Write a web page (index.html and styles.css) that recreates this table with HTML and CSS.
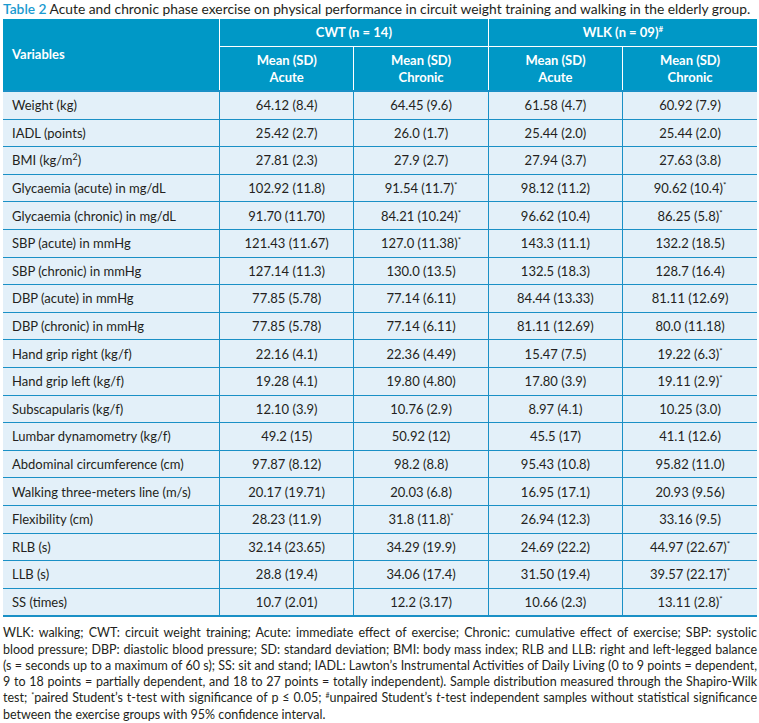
FILE: index.html
```html
<!DOCTYPE html>
<html>
<head>
<meta charset="utf-8">
<link rel="stylesheet" href="styles.css">
</head>
<body>
<div class="wrap">
  <p class="title"><span class="label">Table 2</span> Acute and chronic phase exercise on physical performance in circuit weight training and walking in the elderly group.</p>
  <table class="data">
    <thead>
      <tr class="h1">
        <th rowspan="2" class="var">Variables</th>
        <th colspan="2">CWT (n = 14)</th>
        <th colspan="2">WLK (n = 09)<sup>#</sup></th>
      </tr>
      <tr class="h2">
        <th>Mean (SD)<br>Acute</th>
        <th>Mean (SD)<br>Chronic</th>
        <th>Mean (SD)<br>Acute</th>
        <th>Mean (SD)<br>Chronic</th>
      </tr>
    </thead>
    <tbody>
      <tr><td>Weight (kg)</td><td>64.12 (8.4)</td><td>64.45 (9.6)</td><td>61.58 (4.7)</td><td>60.92 (7.9)</td></tr>
      <tr><td>IADL (points)</td><td>25.42 (2.7)</td><td>26.0 (1.7)</td><td>25.44 (2.0)</td><td>25.44 (2.0)</td></tr>
      <tr><td>BMI (kg/m<sup class="sq">2</sup>)</td><td>27.81 (2.3)</td><td>27.9 (2.7)</td><td>27.94 (3.7)</td><td>27.63 (3.8)</td></tr>
      <tr><td>Glycaemia (acute) in mg/dL</td><td>102.92 (11.8)</td><td>91.54 (11.7)<sup>*</sup></td><td>98.12 (11.2)</td><td>90.62 (10.4)<sup>*</sup></td></tr>
      <tr><td>Glycaemia (chronic) in mg/dL</td><td>91.70 (11.70)</td><td>84.21 (10.24)<sup>*</sup></td><td>96.62 (10.4)</td><td>86.25 (5.8)<sup>*</sup></td></tr>
      <tr><td>SBP (acute) in mmHg</td><td>121.43 (11.67)</td><td>127.0 (11.38)<sup>*</sup></td><td>143.3 (11.1)</td><td>132.2 (18.5)</td></tr>
      <tr><td>SBP (chronic) in mmHg</td><td>127.14 (11.3)</td><td>130.0 (13.5)</td><td>132.5 (18.3)</td><td>128.7 (16.4)</td></tr>
      <tr><td>DBP (acute) in mmHg</td><td>77.85 (5.78)</td><td>77.14 (6.11)</td><td>84.44 (13.33)</td><td>81.11 (12.69)</td></tr>
      <tr><td>DBP (chronic) in mmHg</td><td>77.85 (5.78)</td><td>77.14 (6.11)</td><td>81.11 (12.69)</td><td>80.0 (11.18)</td></tr>
      <tr><td>Hand grip right (kg/f)</td><td>22.16 (4.1)</td><td>22.36 (4.49)</td><td>15.47 (7.5)</td><td>19.22 (6.3)<sup>*</sup></td></tr>
      <tr><td>Hand grip left (kg/f)</td><td>19.28 (4.1)</td><td>19.80 (4.80)</td><td>17.80 (3.9)</td><td>19.11 (2.9)<sup>*</sup></td></tr>
      <tr><td>Subscapularis (kg/f)</td><td>12.10 (3.9)</td><td>10.76 (2.9)</td><td>8.97 (4.1)</td><td>10.25 (3.0)</td></tr>
      <tr><td>Lumbar dynamometry (kg/f)</td><td>49.2 (15)</td><td>50.92 (12)</td><td>45.5 (17)</td><td>41.1 (12.6)</td></tr>
      <tr><td>Abdominal circumference (cm)</td><td>97.87 (8.12)</td><td>98.2 (8.8)</td><td>95.43 (10.8)</td><td>95.82 (11.0)</td></tr>
      <tr><td>Walking three-meters line (m/s)</td><td>20.17 (19.71)</td><td>20.03 (6.8)</td><td>16.95 (17.1)</td><td>20.93 (9.56)</td></tr>
      <tr><td>Flexibility (cm)</td><td>28.23 (11.9)</td><td>31.8 (11.8)<sup>*</sup></td><td>26.94 (12.3)</td><td>33.16 (9.5)</td></tr>
      <tr><td>RLB (s)</td><td>32.14 (23.65)</td><td>34.29 (19.9)</td><td>24.69 (22.2)</td><td>44.97 (22.67)<sup>*</sup></td></tr>
      <tr><td>LLB (s)</td><td>28.8 (19.4)</td><td>34.06 (17.4)</td><td>31.50 (19.4)</td><td>39.57 (22.17)<sup>*</sup></td></tr>
      <tr><td>SS (times)</td><td>10.7 (2.01)</td><td>12.2 (3.17)</td><td>10.66 (2.3)</td><td>13.11 (2.8)<sup>*</sup></td></tr>
    </tbody>
  </table>
  <p class="note">WLK: walking; CWT: circuit weight training; Acute: immediate effect of exercise; Chronic: cumulative effect of exercise; SBP: systolic blood pressure; DBP: diastolic blood pressure; SD: standard deviation; BMI: body mass index; RLB and LLB: right and left-legged balance (s = seconds up to a maximum of 60 s); SS: sit and stand; IADL: Lawton’s Instrumental Activities of Daily Living (0 to 9 points = dependent, 9 to 18 points = partially dependent, and 18 to 27 points = totally independent). Sample distribution measured through the Shapiro-Wilk test; <sup>*</sup>paired Student’s t-test with significance of p ≤ 0.05; <sup>#</sup>unpaired Student’s <i>t</i>-test independent samples without statistical significance between the exercise groups with 95% confidence interval.</p>
</div>
</body>
</html>
```

FILE: styles.css
```css
html, body {
  margin: 0;
  padding: 0;
  background: #ffffff;
}
body {
  font-family: "Lato", "Open Sans", sans-serif;
  color: #231f20;
}
.wrap {
  padding: 0 2px 0 3px;
}
.title {
  margin: 0;
  height: 19px;
  font-size: 13.8px;
  line-height: 17px;
  white-space: nowrap;
  color: #231f20;
}
.title .label {
  color: #1a9ad0;
  font-weight: 600;
}
.data {
  width: 754px;
  border-collapse: collapse;
  table-layout: fixed;
  font-size: 13px;
}
.data th {
  background: #0098c6;
  color: #ffffff;
  font-weight: 700;
  font-size: 13px;
  line-height: 17px;
  text-align: center;
  border-left: 1px solid #ffffff;
  border-top: 1px solid #ffffff;
  padding: 0;
}
.data th.var {
  text-align: left;
  padding-left: 9px;
  border-left: none;
  border-top: none;
  width: 207px;
}
.data .h1 th {
  height: 27px;
  border-top: none;
}
.data .h2 th {
  height: 43px;
}
.data td {
  background: #e3f0f9;
  height: 26.6px;
  padding: 0;
  text-align: center;
  border-top: 1px solid #1a90c6;
  border-left: 1px solid #1a90c6;
  line-height: 16px;
  white-space: nowrap;
}
.data td:first-child {
  text-align: left;
  padding-left: 9px;
  border-left: none;
}
.data tbody tr:first-child td {
  border-top: 2px solid #1a90c6;
}
.data tbody tr:last-child td {
  border-bottom: 2px solid #1a90c6;
}
.data sup {
  font-size: 8px;
  vertical-align: 5px;
  line-height: 0;
}
.data sup.sq {
  font-size: 9px;
}
.note {
  margin: 8px 0 0 0;
  font-size: 12.5px;
  line-height: 16.3px;
  text-align: justify;
  color: #231f20;
}
.note sup {
  font-size: 7px;
  vertical-align: 4px;
  line-height: 0;
}
```
